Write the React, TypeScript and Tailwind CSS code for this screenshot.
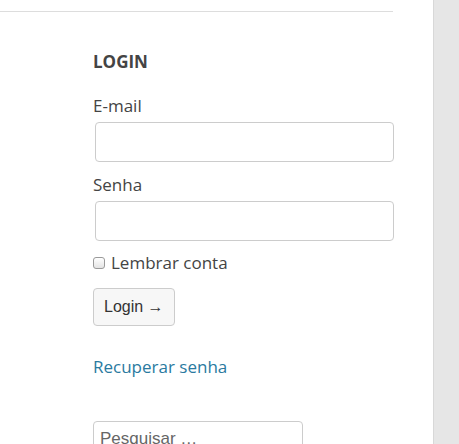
import React from "react";

export default function App() {
  return (
    <div className="flex h-[444px] w-[459px] overflow-hidden bg-white font-['Open_Sans',sans-serif] text-[#444]">
      <div className="w-[433px] shrink-0">
        <div className="mt-[11px] h-px w-[393px] bg-[#dddddd]" />
        <div className="w-[394px] pl-[93px]">
          <h3 className="mt-[39px] text-[17px] font-bold leading-[22px] text-[#444]">LOGIN</h3>
          <form className="flex flex-col">
            <label className="mt-[22px] text-[17px] leading-[22px] text-[#444]">E-mail</label>
            <input
              type="email"
              className="mt-[5px] ml-[2px] h-[40px] rounded-[4px] border border-[#cccccc] bg-white px-2"
            />
            <label className="mt-[12px] text-[17px] leading-[22px] text-[#444]">Senha</label>
            <input
              type="password"
              className="mt-[5px] ml-[2px] h-[40px] rounded-[4px] border border-[#cccccc] bg-white px-2"
            />
            <label className="mt-[11px] flex items-center gap-[6px] text-[17px] leading-[22px] text-[#444]">
              <span className="h-[12px] w-[12px] rounded-[3px] border border-[#9a9a9a] bg-gradient-to-b from-white to-[#e4e4e4]" />
              Lembrar conta
            </label>
            <div className="mt-[14px]">
              <button
                type="button"
                className="h-[38px] rounded-[4px] border border-[#cccccc] bg-[#f7f7f7] px-[10px] font-['Liberation_Sans',Arial,sans-serif] text-[16px] text-[#333]"
              >
                Login →
              </button>
            </div>
            <a href="#" className="mt-[30px] text-[17px] leading-[22px] text-[#2a7aa0]">
              Recuperar senha
            </a>
          </form>
          <div className="mt-[43px] h-[40px] w-[210px] rounded-[4px] border border-[#cccccc] px-[6px] pt-[6px] font-['Liberation_Sans',Arial,sans-serif] text-[17px] leading-[22px] text-[#666]">
            Pesquisar …
          </div>
        </div>
      </div>
      <div className="flex-1 border-l border-[#d8d8d8] bg-[#e6e6e6]" />
    </div>
  );
}
